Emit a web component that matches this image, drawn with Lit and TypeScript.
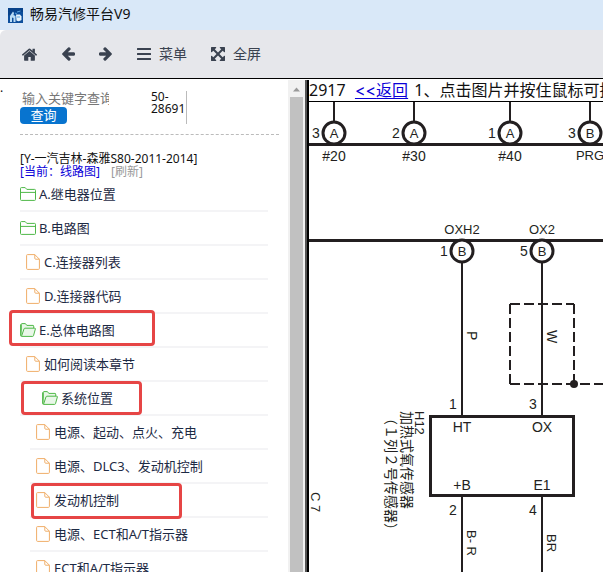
import { LitElement, html, svg, css, nothing } from "lit";
import { customElement, property } from "lit/decorators.js";
import { classMap } from "lit/directives/class-map.js";

type IconKind = "folder" | "open" | "file";
interface Entry {
  label: string;
  icon: IconKind;
  level: "root" | "leaf" | "sub" | "deep";
  mark?: "wide" | "narrow" | "deep";
}

const ENTRIES: Entry[] = [
  { label: "A.继电器位置", icon: "folder", level: "root" },
  { label: "B.电路图", icon: "folder", level: "root" },
  { label: "C.连接器列表", icon: "file", level: "leaf" },
  { label: "D.连接器代码", icon: "file", level: "leaf" },
  { label: "E.总体电路图", icon: "open", level: "root", mark: "wide" },
  { label: "如何阅读本章节", icon: "file", level: "leaf" },
  { label: "系统位置", icon: "open", level: "sub", mark: "narrow" },
  { label: "电源、起动、点火、充电", icon: "file", level: "deep" },
  { label: "电源、DLC3、发动机控制", icon: "file", level: "deep" },
  { label: "发动机控制", icon: "file", level: "deep", mark: "deep" },
  { label: "电源、ECT和A/T指示器", icon: "file", level: "deep" },
  { label: "ECT和A/T指示器", icon: "file", level: "deep" },
];

@customElement("tree-icon")
class TreeIcon extends LitElement {
  @property() kind: IconKind = "file";

  static styles = css`
    :host { display: flex; }
    svg { display: block; fill: none; stroke-linejoin: round; }
    .folder { stroke: #4fb848; }
    .open { stroke: #4fb848; }
    .file { stroke: #f0ae68; }
    .tint { fill: #e9f7e8; }
  `;

  render() {
    if (this.kind === "folder")
      return html`<svg class="folder" width="16" height="14" viewBox="0 0 16 14">
        <path d="M.5 12.5V1.5Q.5.6 1.4.6H5.2L6.8 2.4H14.6Q15.5 2.4 15.5 3.3V12.5Q15.5 13.4 14.6 13.4H1.4Q.5 13.4.5 12.5Z" />
        <path d="M.5 5.4H15.5" />
      </svg>`;
    if (this.kind === "open")
      return html`<svg class="open" width="16" height="14" viewBox="0 0 16 14">
        <path class="tint" d="M1.3 13V1.3Q1.3.6 2 .6H5.4L6.8 2.4H13Q13.7 2.4 13.7 3.1V5.2" />
        <path class="tint" d="M.6 1.4V12.6Q.6 13.4 1.6 13.4H12.6Q13.3 13.4 13.5 12.7L15.4 5.9Q15.5 5.2 14.8 5.2H5Q4.3 5.2 4 5.9L1.6 13" />
      </svg>`;
    return html`<svg class="file" width="14" height="16" viewBox="0 0 14 16">
      <path d="M1.5.6H8.8L13.4 5.2V14.4Q13.4 15.4 12.4 15.4H1.6Q.6 15.4.6 14.4V1.5Q.6.6 1.5.6ZM8.8.6V4.3Q8.8 5.2 9.7 5.2H13.4" />
    </svg>`;
  }
}

@customElement("tree-panel")
class TreePanel extends LitElement {
  static styles = css`
    * { box-sizing: border-box; }
    :host {
      display: flex;
      flex: 1;
      min-width: 0;
      background: #fff;
      overflow: hidden;
      font: 12px/12px "Noto Sans", "Noto Sans CJK SC", sans-serif;
      color: #111;
    }
    .gutter { flex: 0 0 20px; padding-top: 2px; }
    .body { flex: 1; min-width: 0; padding-right: 9px; }
    .search {
      display: flex;
      justify-content: space-between;
      height: 55px;
      padding: 9px 92px 0 0;
      border-bottom: 1px dashed #bbb;
    }
    .form { display: flex; flex-direction: column; align-items: flex-start; margin: 0; }
    .form input {
      width: 89px;
      height: 18px;
      padding: 0 0 0 2px;
      border: 0;
      outline: 0;
      font: 13px/18px "Noto Sans", "Noto Sans CJK SC", sans-serif;
      color: #333;
    }
    .form input::placeholder { color: #777; opacity: 1; }
    .form button {
      width: 47px;
      height: 17px;
      padding: 0;
      border: 0;
      border-radius: 4px;
      background: #0874cf;
      color: #fff;
      font: 13px/17px "Noto Sans", "Noto Sans CJK SC", sans-serif;
    }
    .code { width: 36px; height: 33px; margin: 2px 0 0; border-right: 1px solid #bbb; }
    .path { padding-top: 17px; }
    .path p { margin: 0; line-height: 13px; white-space: nowrap; }
    .current { color: #0a00d8; }
    .path a { color: #999; text-decoration: none; margin-left: 8px; }
    .tree { list-style: none; margin: 0 11px 0 0; padding: 0; }
    .row {
      position: relative;
      display: flex;
      height: 34px;
      border-bottom: 2px solid #f4f4f6;
    }
    .link {
      display: flex;
      align-items: center;
      gap: 3px;
      color: #1d2a44;
      text-decoration: none;
      white-space: nowrap;
      font-size: 13px;
      line-height: 20px;
    }
    .leaf .link { padding-left: 6px; gap: 4px; }
    .sub .link { padding-left: 22px; }
    .deep { margin-left: 10px; }
    .deep .link { padding-left: 6px; gap: 4px; }
    .mark {
      position: absolute;
      z-index: 1;
      border: 3px solid #e64545;
      border-radius: 4px;
      pointer-events: none;
    }
    .wide { left: -11px; top: -4px; width: 146px; height: 36px; }
    .narrow { left: 1px; top: -1px; width: 121px; height: 34px; }
    .inner { left: 1px; top: -1px; width: 151px; height: 36px; }
    .bar {
      flex: 0 0 17px;
      display: flex;
      flex-direction: column;
      align-items: center;
      background: #f1f1f1;
    }
    .bar svg { display: block; flex: 0 0 17px; }
    .thumb { width: 13px; flex: 1; background: #c1c1c1; }
  `;

  render() {
    return html`
      <div class="gutter">.</div>
      <div class="body">
        <div class="search">
          <form class="form" @submit=${(e: Event) => e.preventDefault()}>
            <input type="text" aria-label="输入关键字查询" placeholder="输入关键字查询" />
            <button type="submit">查询</button>
          </form>
          <p class="code">50-<br />28691</p>
        </div>
        <div class="path">
          <p>[Y-一汽吉林-森雅S80-2011-2014]</p>
          <p><span class="current">[当前：线路图]</span> <a href="#refresh">[刷新]</a></p>
        </div>
        <ul class="tree">
          ${ENTRIES.map(
            (e) => html`<li class=${classMap({ row: true, [e.level]: true })}>
              <a class="link" href="#item"><tree-icon .kind=${e.icon}></tree-icon><span>${e.label}</span></a>
              ${e.mark
                ? html`<span class=${classMap({ mark: true, wide: e.mark === "wide", narrow: e.mark === "narrow", inner: e.mark === "deep" })}></span>`
                : nothing}
            </li>`
          )}
        </ul>
      </div>
      <div class="bar">
        <svg width="17" height="17" viewBox="0 0 17 17"><path d="M5 11.5 8.5 7.5 12 11.5Z" fill="#999" /></svg>
        <div class="thumb"></div>
      </div>
    `;
  }
}

@customElement("wiring-diagram")
class WiringDiagram extends LitElement {
  static styles = css`
    :host { display: block; flex: 1; min-height: 0; overflow: hidden; }
    svg {
      display: block;
      font-family: "Liberation Sans", "Noto Sans CJK SC", sans-serif;
      font-size: 14px;
      fill: #231f20;
    }
    .bus { stroke: #231f20; stroke-width: 3; fill: none; }
    .wire { stroke: #231f20; stroke-width: 2; fill: none; }
    .pin { stroke: #231f20; stroke-width: 3; fill: #fff; }
    .dash { stroke: #231f20; stroke-width: 2; fill: none; stroke-dasharray: 10 4; }
    .mid { text-anchor: middle; }
    .small { font-size: 13px; }
    .cjk { font-family: "Noto Sans CJK SC", sans-serif; }
  `;

  private pin(x: number, y: number, letter: string, n: string) {
    return svg`<circle class="pin" cx=${x} cy=${y} r="11" />
      <text class="mid small" x=${x} y=${y + 5}>${letter}</text>
      <text class="mid" x=${x - 18} y=${y + 5}>${n}</text>`;
  }

  private turned(x: number, y: number, text: string, cls = "") {
    return svg`<text class=${cls} transform="translate(${x} ${y}) rotate(90)">${text}</text>`;
  }

  render() {
    return html`<svg width="640" height="600" viewBox="0 0 640 600" role="img" aria-label="线路图">
      <path class="wire" d="M25 0V20M105 0V20M201 0V20M281 0V20" />
      <path class="bus" d="M0 42.500H640M0 138.500H640" />
      ${this.pin(25, 31, "A", "3")} ${this.pin(105, 31, "A", "2")}
      ${this.pin(201, 31, "A", "1")} ${this.pin(281, 31, "B", "3")}
      <text class="mid" x="25" y="59">#20</text>
      <text class="mid" x="105" y="59">#30</text>
      <text class="mid" x="201" y="59">#40</text>
      <text class="mid small" x="281" y="58">PRG</text>

      <text class="mid small" x="153" y="132">OXH2</text>
      <text class="mid small" x="233" y="132">OX2</text>
      <path class="wire" d="M153 160V314M233 160V314M153 394V600M233 394V600" />
      ${this.pin(153, 149, "B", "1")} ${this.pin(233, 149, "B", "5")}

      <path class="dash" d="M201 202V282M201 202H265M265 202V282M201 282H640" />
      <circle cx="265" cy="282" r="4" />

      <rect class="bus" x="121.500" y="314.500" width="143" height="79" />
      <text class="mid" x="144" y="307">1</text>
      <text class="mid" x="224" y="307">3</text>
      <text class="mid" x="153" y="330">HT</text>
      <text class="mid" x="233" y="330">OX</text>
      <text class="mid" x="153" y="388">+B</text>
      <text class="mid" x="233" y="388">E1</text>
      <text class="mid" x="144" y="413">2</text>
      <text class="mid" x="224" y="413">4</text>

      ${this.turned(158, 229, "P")} ${this.turned(238, 228, "W")}
      ${this.turned(158, 428, "B- R", "small")} ${this.turned(238, 432, "BR", "small")}
      ${this.turned(106, 309, "H12", "small")}
      ${this.turned(93, 309, "加热式氧传感器", "cjk")}
      ${this.turned(77, 309, "（１列２号传感器）", "cjk")}
      ${this.turned(2, 390, "C 7", "small")}
    </svg>`;
  }
}

const ARROW =
  "M1664 896v128q0 53-32.500 90.500t-84.500 37.500h-704l293 294q38 36 38 90t-38 90l-75 76q-37 37-90 37-52 0-91-37l-651-652q-37-37-37-90 0-52 37-91l651-650q38-38 91-38 52 0 90 38l75 74q38 38 38 91t-38 91l-293 293h704q52 0 84.500 37.500t32.500 90.500z";

@customElement("app-root")
class AppRoot extends LitElement {
  static styles = css`
    * { box-sizing: border-box; }
    :host {
      display: flex;
      flex-direction: column;
      height: 100vh;
      overflow: hidden;
      background: #fff;
      font-family: "Noto Sans", "Noto Sans CJK SC", sans-serif;
    }
    .title {
      flex: 0 0 30px;
      display: flex;
      align-items: center;
      gap: 7px;
      padding-left: 8px;
      background: #d9e8f8;
      color: #111;
      font-size: 14px;
      line-height: 20px;
    }
    .title h1 { margin: 0; font: inherit; padding-bottom: 2px; }
    .tools {
      flex: 0 0 49px;
      display: flex;
      align-items: center;
      gap: 24px;
      padding: 0 22px;
      background: #e6e7eb;
      border-bottom: 1px solid #000;
      border-top-left-radius: 6px;
    }
    .tool {
      display: flex;
      align-items: center;
      gap: 8px;
      padding: 0;
      border: 0;
      background: none;
      color: #3a4250;
      font: 14px/20px "Noto Sans", "Noto Sans CJK SC", sans-serif;
    }
    .tool svg { display: block; fill: currentColor; overflow: visible; }
    .flip { transform: scaleX(-1); }
    .work { flex: 1; min-height: 0; display: flex; padding-top: 1px; }
    .side { flex: 0 0 305px; display: flex; min-width: 0; }
    .split { flex: 0 0 4px; background: #000; border-left: 2px solid #555; }
    .main { flex: 1; min-width: 0; display: flex; flex-direction: column; overflow: hidden; }
    .hint {
      flex: 0 0 21px;
      margin: 0;
      border-bottom: 1px solid #000;
      color: #111;
      font-size: 16px;
      line-height: 21px;
      white-space: pre;
    }
    .hint a { margin: 0 2px 0 1px; color: #0a00d8; text-underline-offset: 2px; }
    .chevrons { font-family: Inter, sans-serif; font-feature-settings: "calt" 0; }
  `;

  render() {
    return html`
      <header class="title">
        <svg width="15" height="15" viewBox="0 0 15 15" aria-hidden="true">
          <rect width="15" height="15" fill="#0d4f9c" />
          <path d="M0 0H15V4Q7 2 0 8Z" fill="#07428a" />
          <path d="M2 14V8L4 5L5 3.500L6 5L5.500 7L7.500 8V14H5.500V10L4 9.500V14Z" fill="#b9dcf5" />
          <path d="M8 6.500H12L13.500 8.500V12Q11 14 8.500 12.500Z" fill="#e4f3fd" />
          <path d="M9 4L12.500 3M7 5L9 6M9 9H12" stroke="#5ba4dd" fill="none" />
        </svg>
        <h1>畅易汽修平台V9</h1>
      </header>
      <nav class="tools">
        <button class="tool" aria-label="主页">
          <svg width="15" height="15" viewBox="32 80 1600 1600">
            <path d="M1408 992v480q0 26-19 45t-45 19h-384v-384h-256v384h-384q-26 0-45-19t-19-45v-480q0-1 .5-3t.5-3l575-474 575 474q1 2 1 6zm223-69l-62 74q-8 9-21 11h-3q-13 0-21-7l-692-577-692 577q-12 8-24 7-13-2-21-11l-62-74q-8-10-7-23.500t11-21.500l719-599q32-26 76-26t76 26l244 204v-195q0-14 9-23t23-9h192q14 0 23 9t9 23v408l219 182q10 8 11 21.500t-7 23.500z" />
          </svg>
        </button>
        <button class="tool" aria-label="后退">
          <svg width="14" height="14" viewBox="64 160 1600 1600"><path d=${ARROW} /></svg>
        </button>
        <button class="tool" aria-label="前进">
          <svg class="flip" width="14" height="14" viewBox="64 160 1600 1600"><path d=${ARROW} /></svg>
        </button>
        <button class="tool">
          <svg width="14" height="14" viewBox="0 0 14 14">
            <path d="M.5 1h13q.5 0 .5.5v1q0 .5-.5.5h-13Q0 3 0 2.500v-1Q0 1 .5 1zM.5 6h13q.5 0 .5.5v1q0 .5-.5.5h-13Q0 8 0 7.500v-1Q0 6 .5 6zM.5 11h13q.5 0 .5.5v1q0 .5-.5.5h-13Q0 13 0 12.500v-1Q0 11 .5 11z" />
          </svg>
          <span>菜单</span>
        </button>
        <button class="tool">
          <svg width="14" height="14" viewBox="128 128 1536 1536">
            <path d="M1411 541l-355 355 355 355 144-144q29-31 70-14 39 17 39 59v448q0 26-19 45t-45 19h-448q-42 0-59-40-17-39 14-69l144-144-355-355-355 355 144 144q31 30 14 69-17 40-59 40h-448q-26 0-45-19t-19-45v-448q0-42 40-59 39-17 69 14l144 144 355-355-355-355-144 144q-19 19-45 19-12 0-24-5-40-17-40-59v-448q0-26 19-45t45-19h448q42 0 59 40 17 39-14 69l-144 144 355 355 355-355-144-144q-31-30-14-69 17-40 59-40h448q26 0 45 19t19 45v448q0 42-39 59-13 5-25 5-26 0-45-19z" />
          </svg>
          <span>全屏</span>
        </button>
      </nav>
      <div class="work">
        <aside class="side"><tree-panel></tree-panel></aside>
        <div class="split"></div>
        <main class="main">
          <p class="hint">2917  <a href="#back"><span class="chevrons">&lt;&lt;</span>返回</a> 1、点击图片并按住鼠标可拖动</p>
          <wiring-diagram></wiring-diagram>
        </main>
      </div>
    `;
  }
}
